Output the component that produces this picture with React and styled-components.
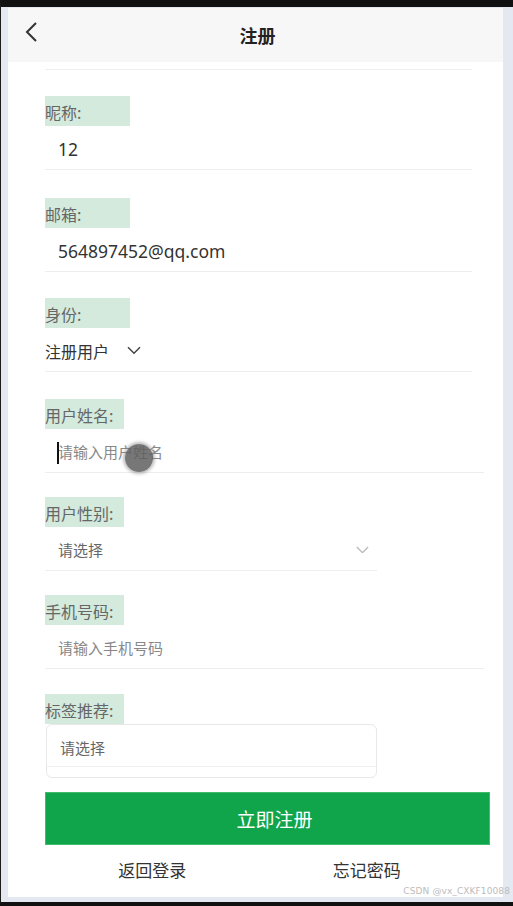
import React from 'react';
import styled, { createGlobalStyle } from 'styled-components';

const GlobalStyle = createGlobalStyle`
  html, body {
    margin: 0;
    padding: 0;
    background: #111;
  }
  body {
    font-family: "Noto Sans", "Noto Sans CJK SC", sans-serif;
  }
  * {
    box-sizing: border-box;
  }
`;

const Frame = styled.div`
  position: relative;
  width: 513px;
  height: 906px;
  background: #e4e9f1;
  border-top: 7px solid #111;
  border-bottom: 4px solid #111;
  border-left: 1px solid #1c1c1c;
  padding: 1px 10px 5px 7px;
  overflow: hidden;
`;

const Screen = styled.div`
  height: 100%;
  background: #fff;
  display: flex;
  flex-direction: column;
`;

const Header = styled.div`
  height: 54px;
  flex: 0 0 54px;
  background: #f7f7f7;
  display: flex;
  align-items: center;
  justify-content: center;
  position: relative;
`;

const BackButton = styled.div`
  position: absolute;
  left: 16px;
  top: 13px;
  width: 16px;
  height: 24px;
  display: flex;
`;

const Title = styled.div`
  font-family: "Noto Sans CJK SC", sans-serif;
  font-size: 18px;
  font-weight: 700;
  color: #222;
  margin-left: 4px;
`;

const Form = styled.div`
  padding: 0 0 0 37px;
  display: flex;
  flex-direction: column;
`;

const Divider = styled.div`
  height: 1px;
  margin-top: 7px;
  margin-right: 31px;
  background: #eeeeee;
`;

const Field = styled.div`
  margin-top: ${p => p.$gap}px;
  display: flex;
  flex-direction: column;
`;

const Label = styled.div`
  width: ${p => p.$w}px;
  height: 30px;
  background: #d3eadd;
  color: #666;
  font-family: "Noto Sans CJK SC", sans-serif;
  font-size: 16px;
  font-weight: 400;
  line-height: 33px;
  white-space: nowrap;
`;

const InputRow = styled.div`
  height: 44px;
  margin-right: ${p => p.$right}px;
  border-bottom: 1px solid #eeeeee;
  display: flex;
  align-items: center;
  padding-left: ${p => p.$pad}px;
  padding-right: 8px;
  padding-top: 2px;
  position: relative;
`;

const Value = styled.span`
  font-family: "Noto Sans", "Noto Sans CJK SC", sans-serif;
  font-size: 17.5px;
  color: #333;
`;

const Placeholder = styled.span`
  font-family: "Noto Sans CJK SC", sans-serif;
  font-size: 15px;
  color: ${p => (p.$dark ? '#666' : '#888')};
`;

const SelectText = styled.span`
  font-family: "Noto Sans CJK SC", sans-serif;
  font-size: 16px;
  color: #333;
  margin-right: 18px;
`;

const Spacer = styled.div`
  flex: 1;
`;

const Caret = styled.span`
  position: absolute;
  left: 12px;
  top: 13px;
  width: 2px;
  height: 22px;
  background: #111;
`;

const Touch = styled.span`
  position: absolute;
  left: 80px;
  top: 15px;
  width: 28px;
  height: 28px;
  border-radius: 50%;
  background: rgba(95, 95, 95, 0.85);
  box-shadow: 0 0 3px 2px rgba(130, 130, 130, 0.5);
`;

const TagBox = styled.div`
  margin-left: 1px;
  width: 331px;
  height: 54px;
  border: 1px solid #e8e8e8;
  border-radius: 6px;
  display: flex;
  flex-direction: column;
`;

const TagInput = styled.div`
  height: 42px;
  border-bottom: 1px solid #f0f0f0;
  display: flex;
  align-items: center;
  padding-left: 13px;
  padding-top: 4px;
`;

const SubmitButton = styled.div`
  margin-top: 14px;
  margin-right: 13px;
  height: 53px;
  background: #11a54b;
  border: 1px solid #3fbd6c;
  display: flex;
  align-items: center;
  justify-content: center;
  color: #fff;
  font-family: "Noto Sans CJK SC", sans-serif;
  font-size: 19px;
  padding-left: 14px;
`;

const Links = styled.div`
  display: grid;
  grid-template-columns: 1fr 1fr;
  margin-right: 29px;
  margin-top: 12px;
`;

const LinkText = styled.div`
  text-align: center;
  font-family: "Noto Sans CJK SC", sans-serif;
  font-size: 17px;
  color: #333;
`;

const Watermark = styled.div`
  position: absolute;
  right: 3px;
  bottom: 6px;
  font-family: "DejaVu Sans", sans-serif;
  font-size: 9px;
  color: #bcbcbc;
  letter-spacing: 0.1px;
`;

const Chevron = ({ color = '#444', size = 14 }) => (
  <svg width={size} height={size * 0.6} viewBox="0 0 14 8">
    <polyline points="1,1 7,7 13,1" fill="none" stroke={color} strokeWidth="1.5" />
  </svg>
);

export default function App() {
  return (
    <>
      <GlobalStyle />
      <Frame>
        <Screen>
          <Header>
            <BackButton>
              <svg width="16" height="24" viewBox="0 0 16 24">
                <polyline points="12,2 3,11 12,20" fill="none" stroke="#333" strokeWidth="2" />
              </svg>
            </BackButton>
            <Title>注册</Title>
          </Header>
          <Form>
            <Divider />
            <Field $gap={26}>
              <Label $w={85}>昵称:</Label>
              <InputRow $right={31} $pad={13}>
                <Value>12</Value>
              </InputRow>
            </Field>
            <Field $gap={28}>
              <Label $w={85}>邮箱:</Label>
              <InputRow $right={31} $pad={13}>
                <Value>564897452@qq.com</Value>
              </InputRow>
            </Field>
            <Field $gap={26}>
              <Label $w={85}>身份:</Label>
              <InputRow $right={31} $pad={0}>
                <SelectText>注册用户</SelectText>
                <Chevron color="#444" />
              </InputRow>
            </Field>
            <Field $gap={27}>
              <Label $w={79}>用户姓名:</Label>
              <InputRow $right={19} $pad={13}>
                <Caret />
                <Placeholder>请输入用户姓名</Placeholder>
                <Touch />
              </InputRow>
            </Field>
            <Field $gap={24}>
              <Label $w={79}>用户性别:</Label>
              <InputRow $right={126} $pad={13}>
                <Placeholder $dark>请选择</Placeholder>
                <Spacer />
                <Chevron color="#bbb" size={13} />
              </InputRow>
            </Field>
            <Field $gap={24}>
              <Label $w={79}>手机号码:</Label>
              <InputRow $right={19} $pad={13}>
                <Placeholder>请输入手机号码</Placeholder>
              </InputRow>
            </Field>
            <Field $gap={25}>
              <Label $w={79}>标签推荐:</Label>
              <TagBox>
                <TagInput>
                  <Placeholder $dark>请选择</Placeholder>
                </TagInput>
              </TagBox>
            </Field>
            <SubmitButton>立即注册</SubmitButton>
            <Links>
              <LinkText>返回登录</LinkText>
              <LinkText>忘记密码</LinkText>
            </Links>
          </Form>
        </Screen>
        <Watermark>CSDN @vx_CXKF10088</Watermark>
      </Frame>
    </>
  );
}
